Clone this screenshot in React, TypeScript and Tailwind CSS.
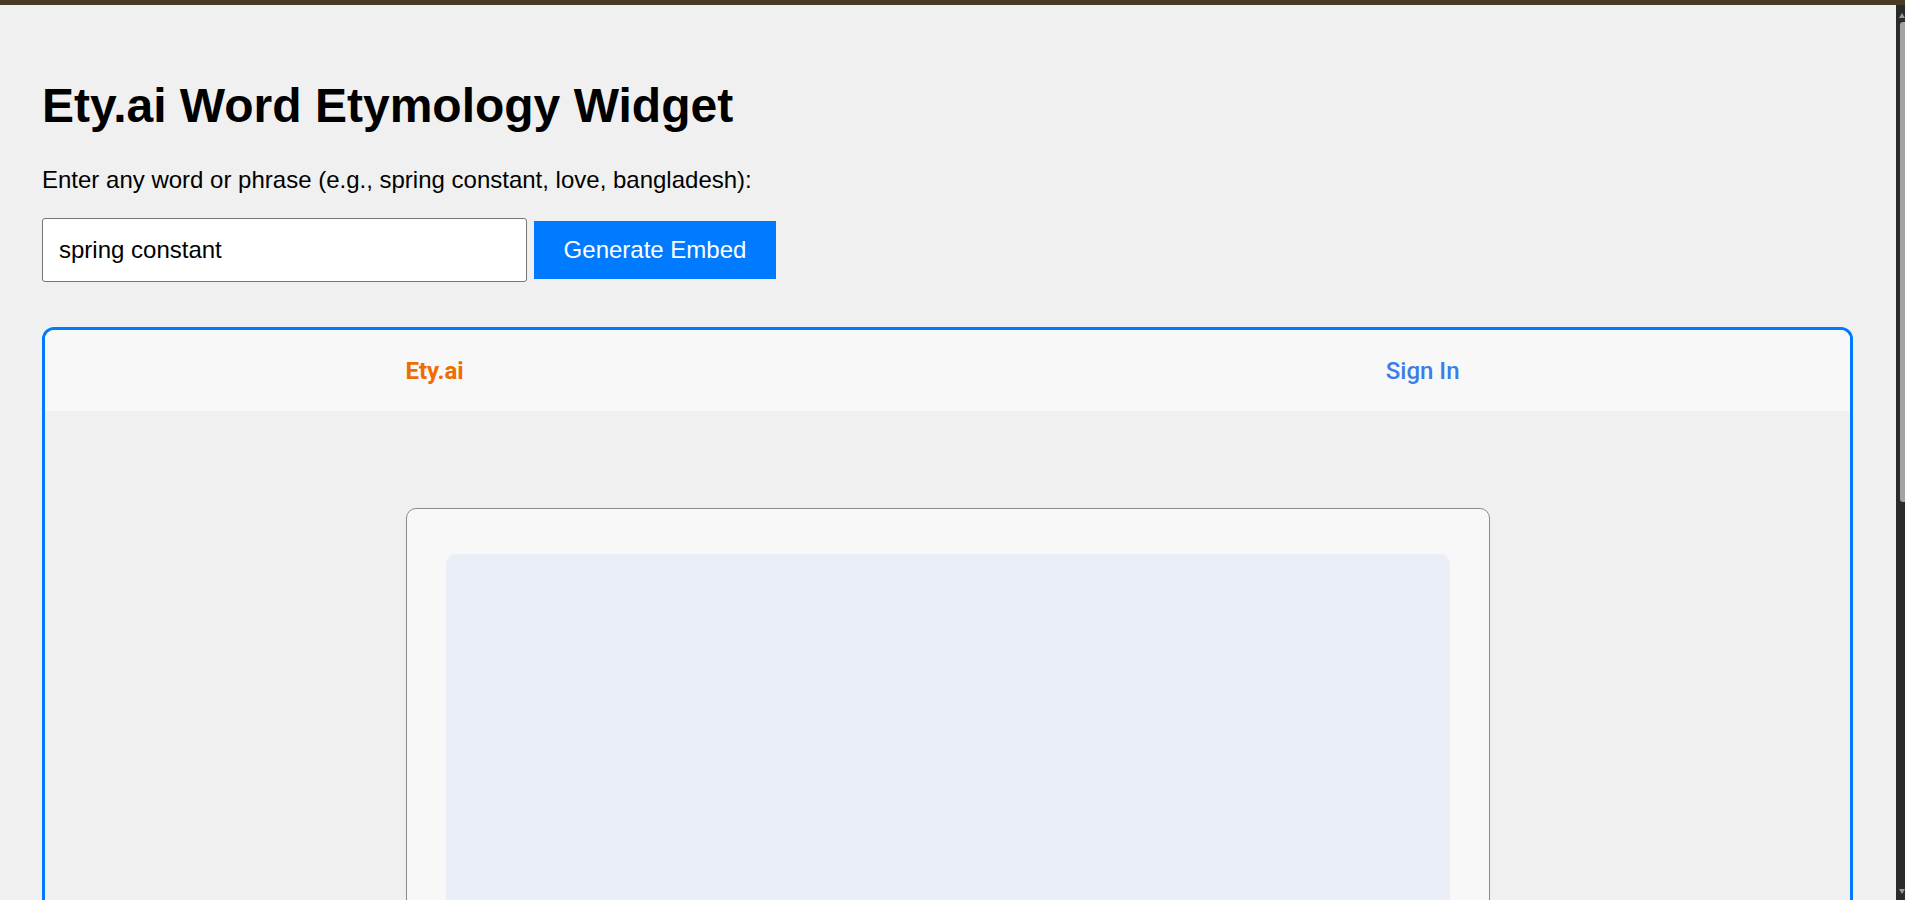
import React from "react";

export default function App() {
  return (
    <div className="w-[1905px] h-[900px] overflow-hidden flex flex-col bg-[#f0f0f0]">
      <div className="h-[5px] bg-[#4a3b26] shrink-0" />
      <div className="flex flex-1 min-h-0">
        <main
          className="flex-1 min-w-0 pl-[42px] pr-[43px] pt-[73px] text-black"
          style={{ fontFamily: '"Liberation Sans", Arial, sans-serif' }}
        >
          <h1 className="text-[48px] leading-[56px] font-bold">Ety.ai Word Etymology Widget</h1>
          <p className="mt-[32px] text-[24px] leading-[28px]">
            Enter any word or phrase (e.g., spring constant, love, bangladesh):
          </p>
          <div className="mt-[24px] flex items-center gap-[7px]">
            <input
              type="text"
              defaultValue="spring constant"
              className="w-[485px] h-[64px] bg-white border border-[#767676] rounded-[3px] pl-[16px] pr-[8px] text-[24px] text-black outline-none"
              style={{ fontFamily: '"Liberation Sans", Arial, sans-serif' }}
            />
            <button
              className="w-[242px] h-[58px] bg-[#007bff] text-white text-[24px] flex items-center justify-center"
              style={{ fontFamily: '"Liberation Sans", Arial, sans-serif' }}
            >
              Generate Embed
            </button>
          </div>
          <section
            className="mt-[45px] border-[3px] border-[#007bff] rounded-[12px] overflow-hidden h-[700px]"
            style={{ fontFamily: 'Roboto, "Noto Sans", sans-serif' }}
          >
            <header className="h-[81px] bg-[#f8f8f8] flex items-center">
              <div className="w-[1084px] mx-auto flex items-center justify-between pr-[30px]">
                <span className="text-[24px] font-bold text-[#ef6c00]">Ety.ai</span>
                <span className="text-[24px] font-medium text-[#3b7de9]">Sign In</span>
              </div>
            </header>
            <div className="bg-[#f0f0f0] pt-[97px] flex justify-center">
              <div className="w-[1084px] bg-[#f8f8f8] border border-[#8a8a8a] rounded-[10px] pt-[45px] px-[39px] pb-[40px]">
                <div className="h-[600px] bg-[#eaeef6] rounded-[10px]" />
              </div>
            </div>
          </section>
        </main>
        <div className="w-[9px] shrink-0 bg-[#2b2b2b] flex flex-col items-end">
          <div className="mt-[8px] mr-[0px] w-0 h-0 border-l-[3px] border-r-[3px] border-b-[5px] border-l-transparent border-r-transparent border-b-[#9a9a9a]" />
          <div className="mt-[4px] w-[5px] h-[480px] bg-[#a3a3a3] rounded-l-[3px]" />
          <div className="flex-1" />
          <div className="mb-[6px] w-0 h-0 border-l-[3px] border-r-[3px] border-t-[5px] border-l-transparent border-r-transparent border-t-[#9a9a9a]" />
        </div>
      </div>
    </div>
  );
}
